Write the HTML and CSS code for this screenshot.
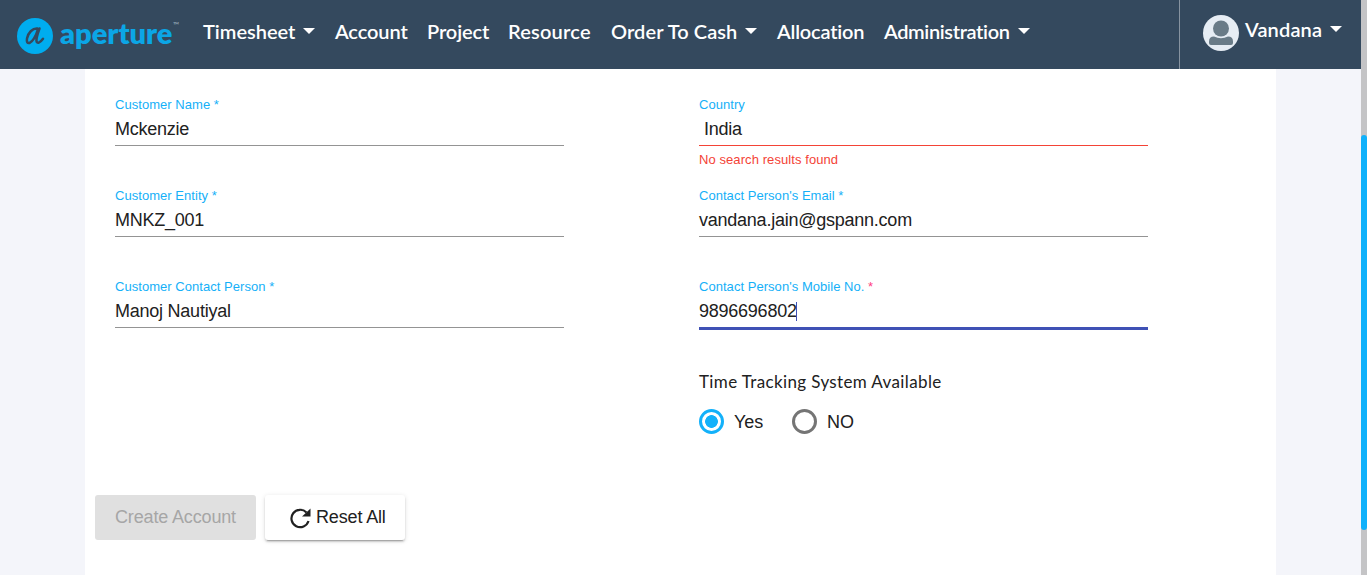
FILE: index.html
```
<!DOCTYPE html>
<html lang="en">
<head>
<meta charset="utf-8">
<title>Aperture - Create Account</title>
<link rel="stylesheet" href="styles.css">
</head>
<body>
<div class="page">
  <header class="navbar">
    <div class="brand">
      <svg class="brand-mark" viewBox="0 0 36 36"><circle cx="18" cy="18" r="18" fill="#00adef"/><path d="M20.500 10.500C15.500 10 11 15 10 20.500c-.6 3.500.5 5 2.500 4.500C15.500 24 19 18 20.500 12.500M22.500 10.500c-1.500 4.500-3.500 9.500-3 12.500.5 3 3.500 2 6.500-2.200" fill="none" stroke="#34495e" stroke-width="2.500" stroke-linecap="round" stroke-linejoin="round"/></svg>
      <span class="brand-name">aperture</span><span class="tm">™</span>
    </div>
    <nav class="menu">
      <a class="w-timesheet"><span>Timesheet</span><i class="caret"></i></a>
      <a class="w-account"><span>Account</span></a>
      <a class="w-project"><span>Project</span></a>
      <a class="w-resource"><span>Resource</span></a>
      <a class="w-order"><span>Order To Cash</span><i class="caret"></i></a>
      <a class="w-allocation"><span>Allocation</span></a>
      <a class="w-admin"><span>Administration</span><i class="caret"></i></a>
    </nav>
    <div class="user">
      <svg class="avatar" viewBox="0 0 36 36"><circle cx="18" cy="18" r="18" fill="#e6edf4"/><circle cx="18" cy="13.500" r="8" fill="#697b87"/><path d="M6 28v-1.500Q6 21.500 11 21.500Q18 25 25 21.500Q30 21.500 30 26.500V28Q30 30 28 30H8Q6 30 6 28Z" fill="#697b87"/></svg>
      <span class="user-name">Vandana</span><i class="caret"></i>
    </div>
  </header>
  <main class="card">
    <form class="fields">
      <div class="field"><label>Customer Name *</label><div class="value">Mckenzie</div></div>
      <div class="field invalid"><label>Country</label><div class="value indent">India</div><p class="error">No search results found</p></div>
      <div class="field"><label>Customer Entity *</label><div class="value">MNKZ_001</div></div>
      <div class="field"><label>Contact Person's Email *</label><div class="value">vandana.jain@gspann.com</div></div>
      <div class="field"><label>Customer Contact Person *</label><div class="value">Manoj Nautiyal</div></div>
      <div class="field focused"><label>Contact Person's Mobile No. <b>*</b></label><div class="value">9896696802<i class="cursor"></i></div></div>
      <div class="tracking">
        <div class="question">Time Tracking System Available</div>
        <div class="options">
          <span class="radio checked"></span><span class="opt yes">Yes</span>
          <span class="radio"></span><span class="opt">NO</span>
        </div>
      </div>
    </form>
    <div class="actions">
      <div class="btn create">Create Account</div>
      <div class="btn reset"><svg class="reload" viewBox="0 0 21 21"><path d="M16.500 4.500A8.700 8.700 0 1 0 18.500 13" fill="none" stroke="#212121" stroke-width="2.200"/><path d="M20.500 .5V8.500H12Z" fill="#212121"/></svg><span>Reset All</span></div>
    </div>
  </main>
</div>
<div class="scrollbar"><div class="thumb"></div></div>
</body>
</html>
```
FILE: styles.css
```
* { box-sizing: border-box; }
body { margin: 0; height: 575px; display: flex; overflow: hidden; background: #f4f5fa; font-family: "Liberation Sans", sans-serif; color: #212121; }
.page { width: 1361px; height: 575px; }
.navbar { display: flex; height: 69px; background: #34495e; color: #fff; font-family: Lato, sans-serif; font-size: 20px; font-weight: 600; }
.brand { display: flex; width: 203px; padding-left: 17px; }
.brand-mark { width: 36px; height: 36px; margin-top: 18px; }
.brand-name { margin: 15px 0 0 7px; width: 113px; color: #0ba6e6; font-size: 29px; line-height: 36px; font-weight: 800; }
.tm { margin-top: 21px; font-size: 8px; line-height: 8px; color: #8fa1b2; }
.menu { display: flex; height: 62px; align-items: center; line-height: 24px; }
.menu a { display: flex; flex: none; white-space: nowrap; }
.menu a span { flex: none; }
.caret { flex: none; border: 6px solid transparent; border-top-color: #fff; border-bottom: 0; margin: 9px 0 0 8px; height: 6px; }
.w-timesheet { width: 132px; }
.w-account { width: 92px; letter-spacing: -.1px; }
.w-project { width: 81px; letter-spacing: -.1px; }
.w-resource { width: 103px; letter-spacing: .2px; }
.w-order { width: 166px; letter-spacing: .08px; }
.w-allocation { width: 107px; letter-spacing: -.2px; }
.w-admin { width: 150px; letter-spacing: -.36px; }
.user { display: flex; width: 182px; margin-left: auto; border-left: 1px solid #8793a0; padding-left: 23px; }
.avatar { width: 36px; height: 36px; margin-top: 15px; }
.user-name { margin: 17px 0 0 6px; line-height: 24px; letter-spacing: .15px; }
.user .caret { margin-top: 26px; }
.card { width: 1191px; height: 506px; margin-left: 85px; background: #fff; padding: 26px 10px 0; }
.fields { display: grid; grid-template-columns: 449px 449px; grid-template-rows: 91px 91px 91px 127px; column-gap: 135px; padding-left: 20px; }
label { display: block; height: 18px; padding-top: 1px; font-size: 13px; line-height: 18px; letter-spacing: .04px; color: #15b0f8; white-space: nowrap; }
label b { color: #ff4081; font-weight: 400; }
.value { display: flex; height: 33px; border-bottom: 1px solid #949494; padding-top: 4px; font-size: 18px; line-height: 24px; letter-spacing: -.24px; white-space: nowrap; }
.indent { padding-left: 5px; }
.invalid .value { border-color: #f44336; }
.focused .value { height: 35px; border-bottom: 3px solid #3f51b5; }
.cursor { width: 1px; height: 19px; margin: 3px 0 0 -1px; background: #3f51b5; }
.error { margin: 5px 0 0; font-size: 13px; line-height: 18px; letter-spacing: .08px; color: #f44336; }
.tracking { grid-column: 2; padding-top: 3px; }
.question { font-family: Lato, sans-serif; font-size: 17px; line-height: 22px; letter-spacing: .37px; white-space: nowrap; }
.options { display: flex; align-items: center; height: 25px; margin-top: 16px; font-size: 18px; }
.radio { width: 25px; height: 25px; border: 3px solid #757575; border-radius: 50%; }
.radio.checked { border-color: #13b1fa; background: radial-gradient(circle, #13b1fa 6px, #fff 6.700px); }
.opt { margin-left: 10px; padding-top: 1px; }
.yes { width: 58px; }
.actions { display: flex; gap: 9px; }
.btn { display: flex; align-items: center; height: 45px; border-radius: 3px; font-size: 18px; letter-spacing: -.15px; white-space: nowrap; }
.create { width: 161px; padding-left: 20px; background: #e0e0e0; color: #a6a6a6; }
.reset { width: 140px; padding-left: 25px; background: #fff; box-shadow: 0 3px 1px -2px rgba(0,0,0,.2), 0 2px 2px rgba(0,0,0,.14), 0 1px 5px rgba(0,0,0,.12); }
.reload { width: 21px; height: 21px; margin-right: 5px; margin-top: 1px; }
.scrollbar { width: 6px; height: 575px; background: #c4c4c6; padding-top: 135px; }
.thumb { height: 395px; background: #10b1fb; border-radius: 3px; }
```
